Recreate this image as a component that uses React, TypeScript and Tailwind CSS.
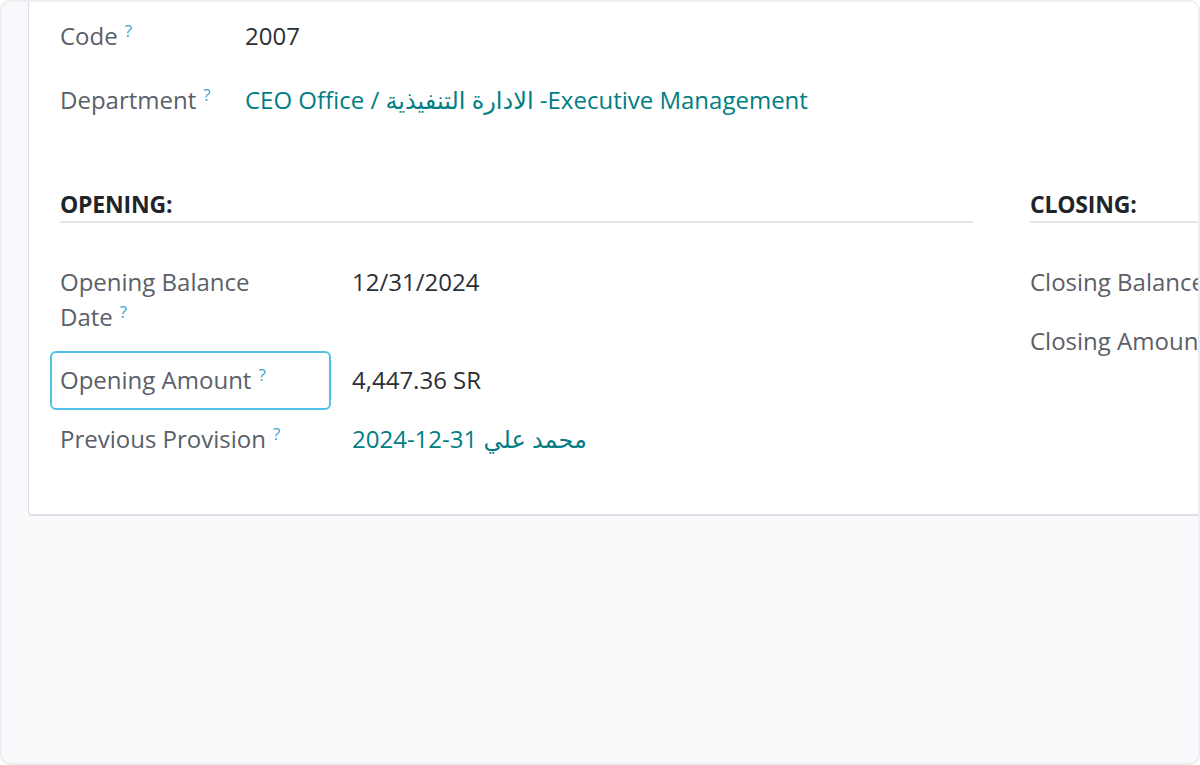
import React from "react";

const FONT = { fontFamily: '"Open Sans", "DejaVu Sans", sans-serif' };

function Q() {
  return <sup className="text-[17px] text-[#3fa6cb] ml-[7px] font-normal">?</sup>;
}

function Row({
  label,
  value,
  boxed = false,
  link = false,
  first = false,
}: {
  label: React.ReactNode;
  value?: React.ReactNode;
  boxed?: boolean;
  link?: boolean;
  first?: boolean;
}) {
  return (
    <div className="flex items-start">
      <div
        className={
          boxed
            ? "w-[281px] shrink-0 border-2 border-[#4fc3ea] rounded-[6px] pl-[8px] pr-[36px] pt-[9px] pb-[11px] text-[#5b6068]"
            : first
            ? "w-[281px] shrink-0 border-2 border-transparent rounded-[6px] pl-[8px] pr-[36px] pt-[9px] pb-[15px] text-[#5b6068]"
            : "w-[281px] shrink-0 border-2 border-transparent rounded-[6px] pl-[8px] pr-[36px] pt-[9px] pb-[13px] text-[#5b6068]"
        }
      >
        {label}
      </div>
      {value !== undefined && (
        <div
          className={
            link
              ? "ml-[21px] pt-[11px] text-[#017e84] whitespace-nowrap"
              : "ml-[21px] pt-[11px] text-[#2b2f36] whitespace-nowrap"
          }
        >
          {value}
        </div>
      )}
    </div>
  );
}

export default function App() {
  return (
    <div
      className="w-[1200px] h-[765px] border-2 border-[#eeeef2] rounded-[10px] bg-[#f8f9fb] overflow-hidden text-[24px] leading-[35px]"
      style={FONT}
    >
      <div className="ml-[26px] w-[1300px] h-[514px] bg-white border-l border-b-2 border-[#dcdfe3] rounded-bl-[4px] pl-[21px] pt-[16px]">
        {/* Top group */}
        <div className="flex flex-col gap-[29px]">
          <div className="flex">
            <div className="w-[195px] shrink-0 pl-[10px] text-[#5b6068]">
              Code
              <Q />
            </div>
            <div className="text-[#2b2f36]">2007</div>
          </div>
          <div className="flex">
            <div className="w-[195px] shrink-0 pl-[10px] text-[#5b6068]">
              Department
              <Q />
            </div>
            <div className="text-[#017e84] whitespace-nowrap">
              CEO Office / الادارة التنفيذية -Executive Management
            </div>
          </div>
        </div>

        {/* Opening / Closing */}
        <div className="flex mt-[71px]">
          <div className="w-[970px] shrink-0">
            <div className="ml-[10px] mr-[47px]">
              <div className="text-[23px] leading-[33px] font-bold text-[#212529] tracking-[-0.2px]">
                OPENING:
              </div>
              <div className="h-[2px] bg-[#e4e6e9]" />
            </div>
            <div className="mt-[30px] flex flex-col">
              <Row
                first
                label={
                  <span>
                    Opening Balance Date
                    <Q />
                  </span>
                }
                value="12/31/2024"
              />
              <Row
                boxed
                label={
                  <span>
                    Opening Amount
                    <Q />
                  </span>
                }
                value="4,447.36 SR"
              />
              <Row
                link
                label={
                  <span>
                    Previous Provision
                    <Q />
                  </span>
                }
                value={
                  <span>
                    2024-12-31 <bdi>محمد علي</bdi>
                  </span>
                }
              />
            </div>
          </div>
          <div className="flex-1">
            <div className="ml-[10px]">
              <div className="text-[23px] leading-[33px] font-bold text-[#212529] tracking-[-0.2px]">
                CLOSING:
              </div>
              <div className="h-[2px] bg-[#e4e6e9]" />
            </div>
            <div className="mt-[30px] flex flex-col">
              <div className="border-2 border-transparent pl-[8px] pt-[9px] pb-[13px] text-[#5b6068] whitespace-nowrap">
                Closing Balance Date
                <Q />
              </div>
              <div className="border-2 border-transparent pl-[8px] pt-[9px] pb-[13px] text-[#5b6068] whitespace-nowrap -mt-[2px]">
                Closing Amount
                <Q />
              </div>
            </div>
          </div>
        </div>
      </div>
    </div>
  );
}
